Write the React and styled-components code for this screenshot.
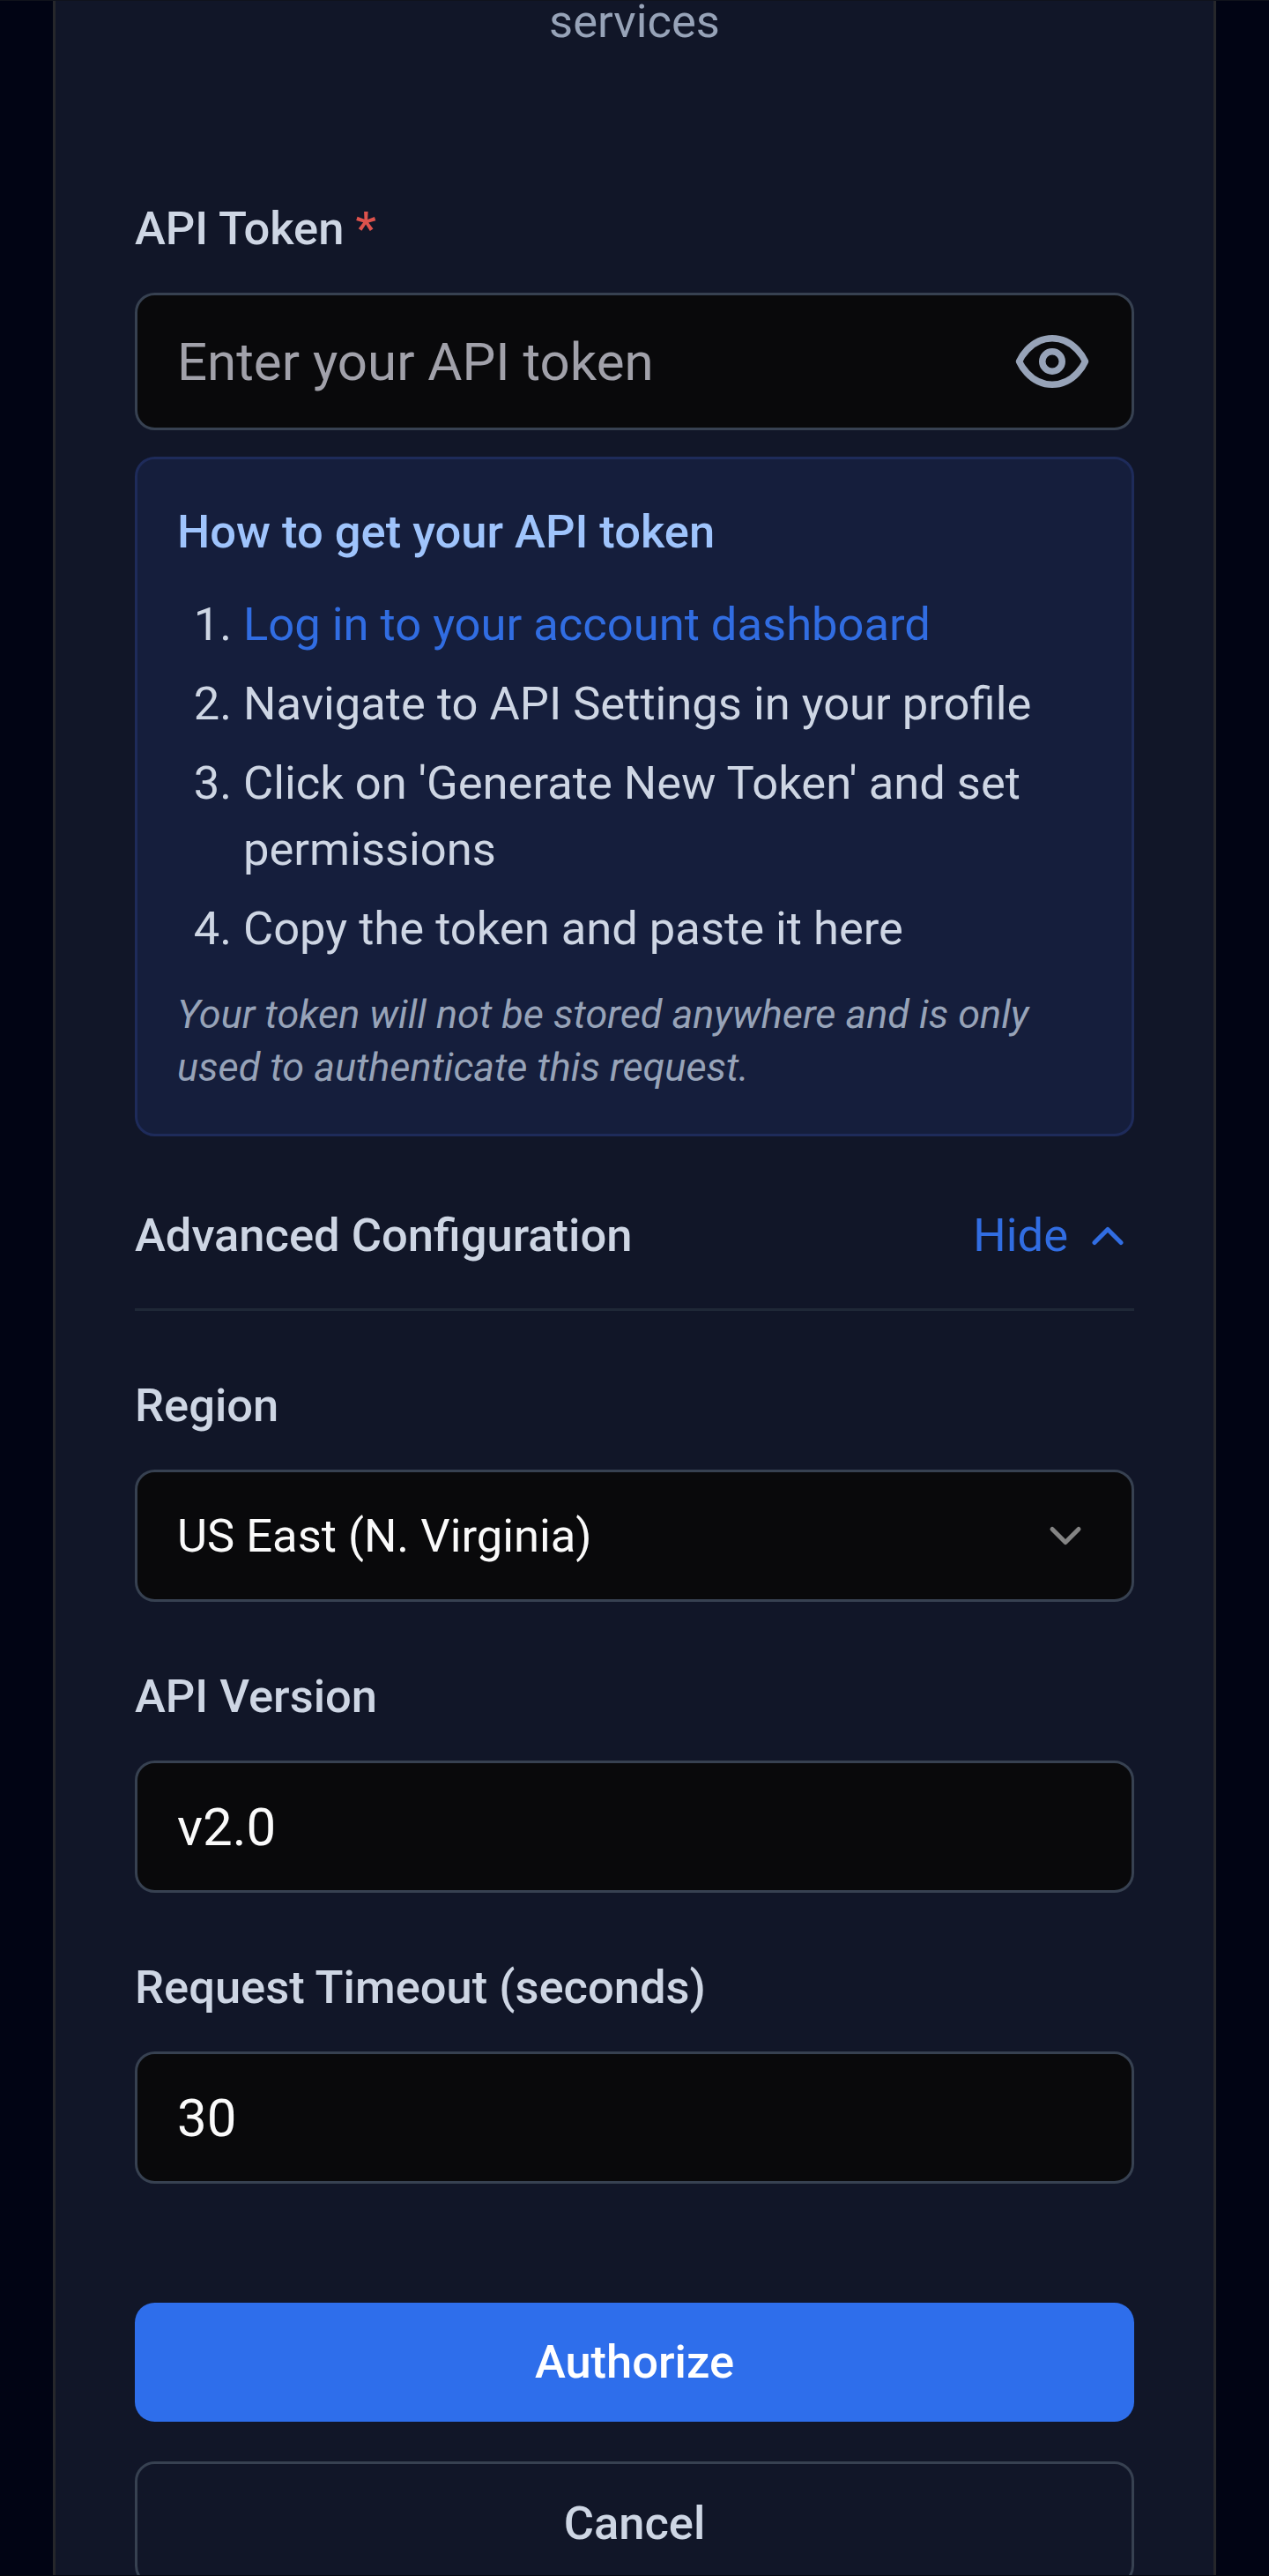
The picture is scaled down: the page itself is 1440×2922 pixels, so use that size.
import React, { useState } from "react";
import styled, { createGlobalStyle } from "styled-components";
import { ChevronUp, ChevronDown } from "lucide-react";

const GlobalStyle = createGlobalStyle`
  *, *::before, *::after { box-sizing: border-box; }
  body {
    margin: 0;
    background: #010414;
    font-family: Roboto, "Liberation Sans", sans-serif;
    font-size: 52.5px;
    line-height: 75px;
  }
  button, input { font-family: inherit; margin: 0; }
`;

const Page = styled.div`
  height: 2922px;
  overflow: hidden;
  padding: 0 60px;
  background: #010414;
  border-top: 1px solid #10131c;
  border-bottom: 1px solid #04060e;
`;

const Panel = styled.main`
  height: 2960px;
  padding: 0 90px;
  background: #111628;
  border: solid #26272b;
  border-width: 0 3px;
`;

const Intro = styled.p`
  margin: 0 0 174px;
  line-height: 47px;
  text-align: center;
  color: #97a3b8;
`;

const Field = styled.div`
  display: flex;
  flex-direction: column;
  gap: 35px;
`;

const Label = styled.label`
  font-weight: 500;
  color: #ced6e4;
`;

const Required = styled.span`
  color: #dd524c;
`;

const Control = styled.div`
  display: flex;
  align-items: center;
  height: ${(p) => p.$height || 150}px;
  padding: 0 45px;
  border: 3px solid #374151;
  border-radius: 22.5px;
  background: #09090b;
`;

const TextInput = styled.input`
  flex: 1;
  min-width: 0;
  height: 90px;
  padding: 0;
  border: 0;
  outline: 0;
  background: transparent;
  color: #fafafa;
  font-size: 60px;
  &::placeholder { color: #a1a1aa; opacity: 1; }
`;

const IconButton = styled.button`
  display: flex;
  padding: 0;
  border: 0;
  background: none;
  color: #97a3b8;
`;

const Selected = styled.span`
  flex: 1;
  color: #fafafa;
`;

const InfoBox = styled.section`
  margin-top: 30px;
  padding: 45px;
  border: 3px solid #1e2b5a;
  border-radius: 22.5px;
  background: #151e3c;
`;

const InfoTitle = styled.h2`
  margin: 0 0 30px;
  font-size: inherit;
  font-weight: 500;
  color: #9fc4fc;
`;

const Steps = styled.ol`
  display: flex;
  flex-direction: column;
  gap: 15px;
  margin: 0;
  padding: 0 0 0 75px;
  color: #ced6e4;
`;

const StepLink = styled.a`
  color: #316de2;
  text-decoration: none;
`;

const Note = styled.p`
  margin: 30px 0 0;
  font-size: 45px;
  line-height: 60px;
  font-style: italic;
  color: #97a3b8;
`;

const SectionHeader = styled.div`
  display: flex;
  align-items: center;
  justify-content: space-between;
  margin-top: 75px;
  padding-bottom: 45px;
  border-bottom: 3px solid #1f2837;
`;

const SectionTitle = styled.h3`
  margin: 0;
  font-size: inherit;
  font-weight: 500;
  color: #ced6e4;
`;

const Toggle = styled.button`
  display: flex;
  align-items: center;
  gap: 15px;
  padding: 0;
  border: 0;
  background: none;
  color: #316de2;
  font-size: 52.5px;
  line-height: 75px;
`;

const Fields = styled.div`
  display: flex;
  flex-direction: column;
  gap: 70px;
  margin-top: 70px;
`;

const Actions = styled.div`
  display: flex;
  flex-direction: column;
  gap: 45px;
  margin-top: 135px;
`;

const Button = styled.button`
  height: ${(p) => (p.$primary ? 135 : 141)}px;
  padding: 0;
  border: ${(p) => (p.$primary ? "0" : "3px solid #374151")};
  border-radius: 22.5px;
  background: ${(p) => (p.$primary ? "#2e6eeb" : "transparent")};
  color: ${(p) => (p.$primary ? "#ffffff" : "#ced6e4")};
  font-size: 52.5px;
  font-weight: 500;
  line-height: 75px;
`;

function EyeIcon() {
  return (
    <svg
      width="90"
      height="90"
      viewBox="0 0 24 24"
      fill="none"
      stroke="currentColor"
      strokeWidth="2"
      strokeLinecap="round"
      strokeLinejoin="round"
    >
      <path d="M2 12s3-7 10-7 10 7 10 7-3 7-10 7-10-7-10-7Z" />
      <circle cx="12" cy="12" r="3" />
    </svg>
  );
}

export default function App() {
  const [token, setToken] = useState("");
  const [version, setVersion] = useState("v2.0");
  const [timeout, setTimeoutValue] = useState("30");
  const [revealed, setRevealed] = useState(false);
  const [open, setOpen] = useState(true);

  return (
    <>
      <GlobalStyle />
      <Page>
        <Panel>
          <Intro>services</Intro>
          <Field>
            <Label htmlFor="token">
              API Token <Required>*</Required>
            </Label>
            <Control $height={156}>
              <TextInput
                id="token"
                type={revealed ? "text" : "password"}
                placeholder="Enter your API token"
                value={token}
                onChange={(e) => setToken(e.target.value)}
              />
              <IconButton type="button" aria-label="Show token" onClick={() => setRevealed(!revealed)}>
                <EyeIcon />
              </IconButton>
            </Control>
          </Field>

          <InfoBox>
            <InfoTitle>How to get your API token</InfoTitle>
            <Steps>
              <li><StepLink href="#">Log in to your account dashboard</StepLink></li>
              <li>Navigate to API Settings in your profile</li>
              <li>Click on 'Generate New Token' and set permissions</li>
              <li>Copy the token and paste it here</li>
            </Steps>
            <Note>Your token will not be stored anywhere and is only used to authenticate this request.</Note>
          </InfoBox>

          <SectionHeader>
            <SectionTitle>Advanced Configuration</SectionTitle>
            <Toggle type="button" onClick={() => setOpen(!open)}>
              {open ? "Hide" : "Show"}
              {open ? <ChevronUp size={60} /> : <ChevronDown size={60} />}
            </Toggle>
          </SectionHeader>

          {open && (
            <Fields>
              <Field>
                <Label as="span">Region</Label>
                <Control>
                  <Selected>US East (N. Virginia)</Selected>
                  <ChevronDown size={60} color="#848484" />
                </Control>
              </Field>
              <Field>
                <Label htmlFor="version">API Version</Label>
                <Control>
                  <TextInput id="version" value={version} onChange={(e) => setVersion(e.target.value)} />
                </Control>
              </Field>
              <Field>
                <Label htmlFor="timeout">Request Timeout (seconds)</Label>
                <Control>
                  <TextInput id="timeout" value={timeout} onChange={(e) => setTimeoutValue(e.target.value)} />
                </Control>
              </Field>
            </Fields>
          )}

          <Actions>
            <Button type="button" $primary>Authorize</Button>
            <Button type="button">Cancel</Button>
          </Actions>
        </Panel>
      </Page>
    </>
  );
}
